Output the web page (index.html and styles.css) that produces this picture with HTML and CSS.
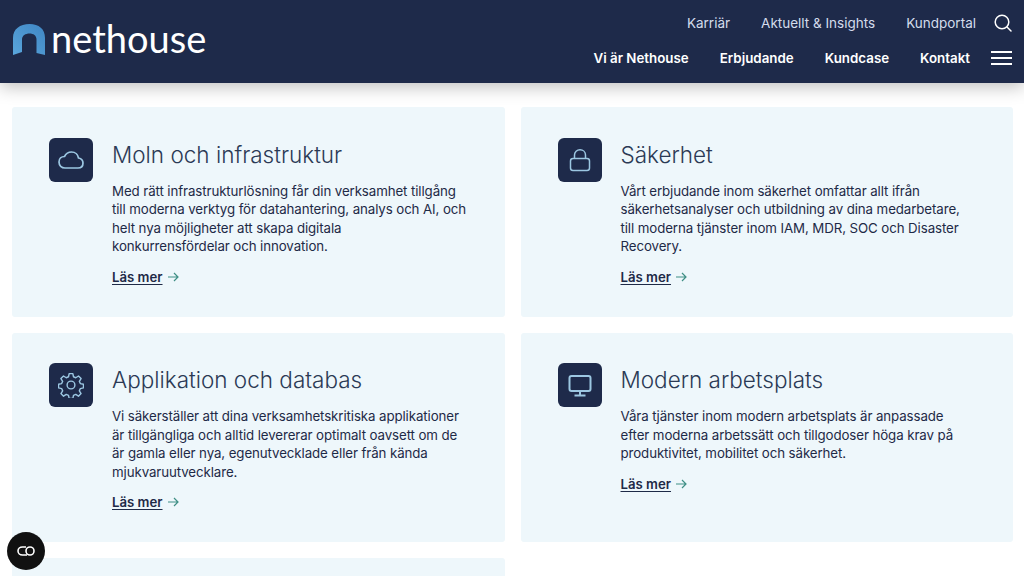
FILE: index.html
```html
<!DOCTYPE html>
<html lang="sv">
<head>
    <meta charset="UTF-8">
    <meta name="viewport" content="width=device-width, initial-scale=1.0">
    <title>Erbjudande - Nethouse</title>
    <link rel="stylesheet" href="styles.css">
</head>
<body>
    <header class="header">
        <a class="logo" href="#">
            <svg class="logo-mark" width="33" height="32" viewBox="0 0 33 32">
                <defs>
                    <linearGradient id="logoFill" x1="0" y1="1" x2="1" y2="0">
                        <stop offset="0" stop-color="#5aa6dc"/>
                        <stop offset="1" stop-color="#3f86c4"/>
                    </linearGradient>
                </defs>
                <path fill="url(#logoFill)" d="M0 31V14C0 5 7 0 16.500 0S32 5 32 14V31L23.500 29V15.500C23.500 11.500 20.500 9.500 16.500 9.500S9 11.500 9 15.500V28Z"/>
            </svg>
            <span class="logo-text">nethouse</span>
        </a>
        <nav class="nav">
            <div class="nav-row nav-top">
                <a href="#">Karriär</a>
                <a href="#">Aktuellt &amp; Insights</a>
                <a href="#">Kundportal</a>
                <svg class="nav-icon" width="18" height="18" viewBox="0 0 18 18" fill="none" stroke="#fff" stroke-width="1.500" stroke-linecap="round">
                    <circle cx="8" cy="8" r="6.800"/>
                    <path d="M13 13l4 4"/>
                </svg>
            </div>
            <div class="nav-row nav-main">
                <a href="#">Vi är Nethouse</a>
                <a href="#">Erbjudande</a>
                <a href="#">Kundcase</a>
                <a href="#">Kontakt</a>
                <svg class="nav-icon menu-icon" width="21" height="16" viewBox="0 0 21 16" fill="none" stroke="#fff" stroke-width="2">
                    <path d="M0 2H21M0 8H21M0 14H21"/>
                </svg>
            </div>
        </nav>
    </header>

    <main class="cards">
        <section class="card">
            <div class="card-icon">
                <svg width="26" height="26" viewBox="0 0 26 26" fill="none" stroke="#9cc7e2" stroke-width="1.700" stroke-linejoin="round">
                    <path d="M7 21C3.500 21 1 18.500 1 15C1 11.500 3.500 9.500 6.500 9.500C8 6.500 10.500 5 13.500 5C17.500 5 20 8 20.500 11C23 11.500 25 13.500 25 16C25 19 23 21 20 21Z"/>
                </svg>
            </div>
            <div class="card-body">
                <h2>Moln och infrastruktur</h2>
                <p>Med rätt infrastrukturlösning får din verksamhet tillgång till moderna verktyg för datahantering, analys och AI, och helt nya möjligheter att skapa digitala<br>konkurrensfördelar och innovation.</p>
                <a class="more" href="#"><span>Läs mer</span>
                    <svg width="11" height="10" viewBox="0 0 11 10" fill="none" stroke="#3f8f85" stroke-width="1.200"><path d="M0 5H10M6 1l4 4-4 4"/></svg>
                </a>
            </div>
        </section>

        <section class="card">
            <div class="card-icon">
                <svg width="26" height="26" viewBox="0 0 26 26" fill="none" stroke="#9cc7e2" stroke-width="1.500">
                    <rect x="3.500" y="11.500" width="19" height="12" rx="2.500"/>
                    <path d="M7.500 11.500V8C7.500 4.800 10 2.800 13 2.800S18.500 4.800 18.500 8V11.500"/>
                </svg>
            </div>
            <div class="card-body">
                <h2>Säkerhet</h2>
                <p>Vårt erbjudande inom säkerhet omfattar allt ifrån säkerhetsanalyser och utbildning av dina medarbetare, till moderna tjänster inom IAM, MDR, SOC och Disaster Recovery.</p>
                <a class="more" href="#"><span>Läs mer</span>
                    <svg width="11" height="10" viewBox="0 0 11 10" fill="none" stroke="#3f8f85" stroke-width="1.200"><path d="M0 5H10M6 1l4 4-4 4"/></svg>
                </a>
            </div>
        </section>

        <section class="card">
            <div class="card-icon">
                <svg width="26" height="26" viewBox="0 0 24 24" fill="none" stroke="#9cc7e2" stroke-width="1.300" stroke-linejoin="round">
                    <path d="M10.300 1.500h3.400l.6 2.900 2.100.9 2.500-1.600 2.400 2.400-1.600 2.500.9 2.100 2.900.6v3.400l-2.900.6-.9 2.100 1.600 2.500-2.400 2.400-2.500-1.600-2.100.9-.6 2.900h-3.400l-.6-2.900-2.100-.9-2.500 1.600-2.400-2.400 1.600-2.500-.9-2.100-2.900-.6v-3.400l2.900-.6.9-2.100-1.600-2.500 2.400-2.400 2.500 1.600 2.100-.9Z"/>
                    <circle cx="12" cy="12" r="3.600"/>
                </svg>
            </div>
            <div class="card-body">
                <h2>Applikation och databas</h2>
                <p>Vi säkerställer att dina verksamhetskritiska applikationer är tillgängliga och alltid levererar optimalt oavsett om de är gamla eller nya, egenutvecklade eller från kända mjukvaruutvecklare.</p>
                <a class="more" href="#"><span>Läs mer</span>
                    <svg width="11" height="10" viewBox="0 0 11 10" fill="none" stroke="#3f8f85" stroke-width="1.200"><path d="M0 5H10M6 1l4 4-4 4"/></svg>
                </a>
            </div>
        </section>

        <section class="card">
            <div class="card-icon">
                <svg width="26" height="26" viewBox="0 0 26 26" fill="none" stroke="#9cc7e2" stroke-width="2">
                    <rect x="2.500" y="4" width="21" height="15" rx="2"/>
                    <path d="M13 19V23M7.500 23.500H18.500"/>
                </svg>
            </div>
            <div class="card-body">
                <h2>Modern arbetsplats</h2>
                <p>Våra tjänster inom modern arbetsplats är anpassade efter moderna arbetssätt och tillgodoser höga krav på produktivitet, mobilitet och säkerhet.</p>
                <a class="more" href="#"><span>Läs mer</span>
                    <svg width="11" height="10" viewBox="0 0 11 10" fill="none" stroke="#3f8f85" stroke-width="1.200"><path d="M0 5H10M6 1l4 4-4 4"/></svg>
                </a>
            </div>
        </section>

        <section class="card"></section>
    </main>

    <button class="cookie-btn" type="button" aria-label="Cookies">
        <svg width="18" height="10" viewBox="0 0 18 10" fill="none" stroke="#fff" stroke-width="1.600">
            <path d="M9 1H5.500C3 1 1 2.800 1 5S3 9 5.500 9H10"/>
            <circle cx="13" cy="5" r="4"/>
        </svg>
    </button>
</body>
</html>
```

FILE: styles.css
```css
html, body {
    height: 100%;
    overflow: hidden;
}
body {
    font-family: Inter, "Liberation Sans", sans-serif;
    background-color: #fff;
    color: #1e2a47;
    margin: 0;
}
a {
    color: inherit;
    text-decoration: none;
}
.header {
    display: flex;
    justify-content: space-between;
    height: 83px;
    padding: 0 12px 0 13px;
    background-color: #1e2a4a;
    box-shadow: 0 4px 16px rgba(0, 0, 0, 0.25);
    color: #fff;
}
.logo {
    display: flex;
    align-items: center;
    gap: 5px;
    margin-top: -4px;
}
.logo-text {
    margin-top: -4px;
    font-family: Lato, sans-serif;
    font-size: 38px;
    font-weight: 400;
    color: #fff;
}
.nav {
    display: flex;
    flex-direction: column;
    align-items: flex-end;
    gap: 18px;
    padding-top: 14px;
}
.nav-row {
    display: flex;
    align-items: center;
    gap: 31px;
}
.nav-top {
    font-size: 13.500px;
    color: #d3dcec;
}
.nav-main {
    font-size: 13.350px;
    font-weight: 600;
}
.nav-icon {
    margin-left: -13px;
}
.menu-icon {
    margin-left: -10px;
}
.cards {
    display: grid;
    grid-template-columns: 492.500px 492.500px;
    grid-auto-rows: 209.500px;
    gap: 16px;
    padding: 24px 12px 0;
}
.card {
    display: flex;
    gap: 19px;
    padding: 30.500px 37px;
    background-color: #eef7fb;
    border-radius: 3px;
}
.card-icon {
    display: flex;
    align-items: center;
    justify-content: center;
    flex: none;
    width: 44px;
    height: 44px;
    background-color: #1e2a4a;
    border-radius: 6px;
}
.card-body h2 {
    margin: 1px 0 11px;
    font-size: 22.500px;
    font-weight: 300;
    line-height: 32px;
    color: #2b3a55;
}
.card-body p {
    width: 355px;
    margin: 0 0 11px;
    font-size: 13.300px;
    letter-spacing: -0.1px;
    line-height: 18.600px;
}
.more {
    display: flex;
    align-items: center;
    gap: 5px;
    font-size: 13.200px;
    font-weight: 600;
    line-height: 20px;
}
.more span {
    text-decoration: underline;
    text-underline-offset: 2px;
}
.cookie-btn {
    position: fixed;
    left: 7px;
    bottom: 6px;
    display: flex;
    align-items: center;
    justify-content: center;
    width: 38px;
    height: 38px;
    padding: 0;
    border: none;
    border-radius: 50%;
    background-color: #111;
    cursor: pointer;
}
```
